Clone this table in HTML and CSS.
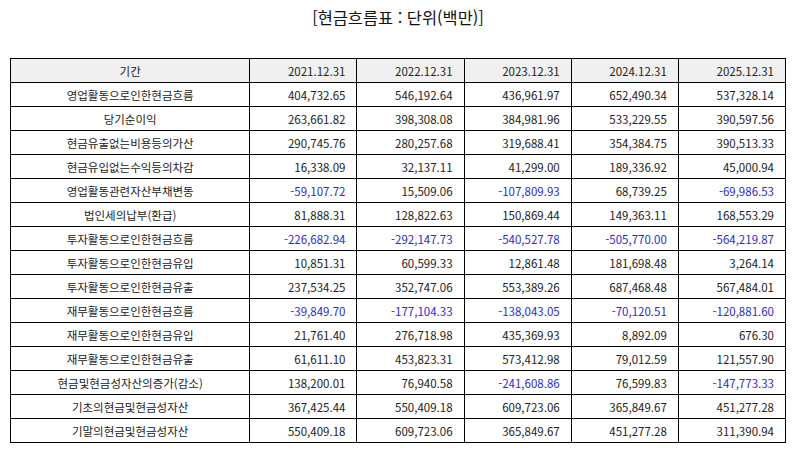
FILE: index.html
```html
<!DOCTYPE html>
<html lang="ko">
<head>
<meta charset="utf-8">
<link rel="stylesheet" href="styles.css">
</head>
<body>
<div class="page">
  <h1 class="title">[현금흐름표 : 단위(백만)]</h1>
  <table class="cf">
    <colgroup>
      <col class="c-label"><col class="c-num"><col class="c-num"><col class="c-num"><col class="c-num"><col class="c-num">
    </colgroup>
    <thead>
      <tr><th class="label">기간</th><th>2021.12.31</th><th>2022.12.31</th><th>2023.12.31</th><th>2024.12.31</th><th>2025.12.31</th></tr>
    </thead>
    <tbody>
      <tr><td class="label">영업활동으로인한현금흐름</td><td>404,732.65</td><td>546,192.64</td><td>436,961.97</td><td>652,490.34</td><td>537,328.14</td></tr>
      <tr><td class="label">당기순이익</td><td>263,661.82</td><td>398,308.08</td><td>384,981.96</td><td>533,229.55</td><td>390,597.56</td></tr>
      <tr><td class="label">현금유출없는비용등의가산</td><td>290,745.76</td><td>280,257.68</td><td>319,688.41</td><td>354,384.75</td><td>390,513.33</td></tr>
      <tr><td class="label">현금유입없는수익등의차감</td><td>16,338.09</td><td>32,137.11</td><td>41,299.00</td><td>189,336.92</td><td>45,000.94</td></tr>
      <tr><td class="label">영업활동관련자산부채변동</td><td class="neg">-59,107.72</td><td>15,509.06</td><td class="neg">-107,809.93</td><td>68,739.25</td><td class="neg">-69,986.53</td></tr>
      <tr><td class="label">법인세의납부(환급)</td><td>81,888.31</td><td>128,822.63</td><td>150,869.44</td><td>149,363.11</td><td>168,553.29</td></tr>
      <tr><td class="label">투자활동으로인한현금흐름</td><td class="neg">-226,682.94</td><td class="neg">-292,147.73</td><td class="neg">-540,527.78</td><td class="neg">-505,770.00</td><td class="neg">-564,219.87</td></tr>
      <tr><td class="label">투자활동으로인한현금유입</td><td>10,851.31</td><td>60,599.33</td><td>12,861.48</td><td>181,698.48</td><td>3,264.14</td></tr>
      <tr><td class="label">투자활동으로인한현금유출</td><td>237,534.25</td><td>352,747.06</td><td>553,389.26</td><td>687,468.48</td><td>567,484.01</td></tr>
      <tr><td class="label">재무활동으로인한현금흐름</td><td class="neg">-39,849.70</td><td class="neg">-177,104.33</td><td class="neg">-138,043.05</td><td class="neg">-70,120.51</td><td class="neg">-120,881.60</td></tr>
      <tr><td class="label">재무활동으로인한현금유입</td><td>21,761.40</td><td>276,718.98</td><td>435,369.93</td><td>8,892.09</td><td>676.30</td></tr>
      <tr><td class="label">재무활동으로인한현금유출</td><td>61,611.10</td><td>453,823.31</td><td>573,412.98</td><td>79,012.59</td><td>121,557.90</td></tr>
      <tr><td class="label">현금및현금성자산의증가(감소)</td><td>138,200.01</td><td>76,940.58</td><td class="neg">-241,608.86</td><td>76,599.83</td><td class="neg">-147,773.33</td></tr>
      <tr><td class="label">기초의현금및현금성자산</td><td>367,425.44</td><td>550,409.18</td><td>609,723.06</td><td>365,849.67</td><td>451,277.28</td></tr>
      <tr><td class="label">기말의현금및현금성자산</td><td>550,409.18</td><td>609,723.06</td><td>365,849.67</td><td>451,277.28</td><td>311,390.94</td></tr>
    </tbody>
  </table>
</div>
</body>
</html>
```

FILE: styles.css
```css
html, body {
  margin: 0;
  padding: 0;
  background: #ffffff;
}

body {
  font-family: "Noto Sans CJK KR", "Noto Sans", sans-serif;
  color: #222222;
}

.page {
  padding: 0 8px 0 10px;
}

.title {
  margin: 0;
  height: 58px;
  padding-top: 5px;
  box-sizing: border-box;
  text-align: center;
  font-size: 16.4px;
  font-weight: 400;
  line-height: 24px;
  color: #111111;
}

.cf {
  width: 776px;
  border-collapse: collapse;
  table-layout: fixed;
  font-size: 11.5px;
}

.c-label { width: 239px; }
.c-num { width: 107px; }

.cf th,
.cf td {
  border: 1px solid #000000;
  height: 23px;
  padding: 0 11px 0 4px;
  text-align: right;
  font-weight: 400;
  line-height: 14px;
  white-space: nowrap;
  color: #222222;
}

.cf thead th {
  background: #f0f0f0;
}

.cf .label {
  text-align: center;
  padding: 0 4px;
}

.cf .neg {
  color: #2b2bd0;
}
```
